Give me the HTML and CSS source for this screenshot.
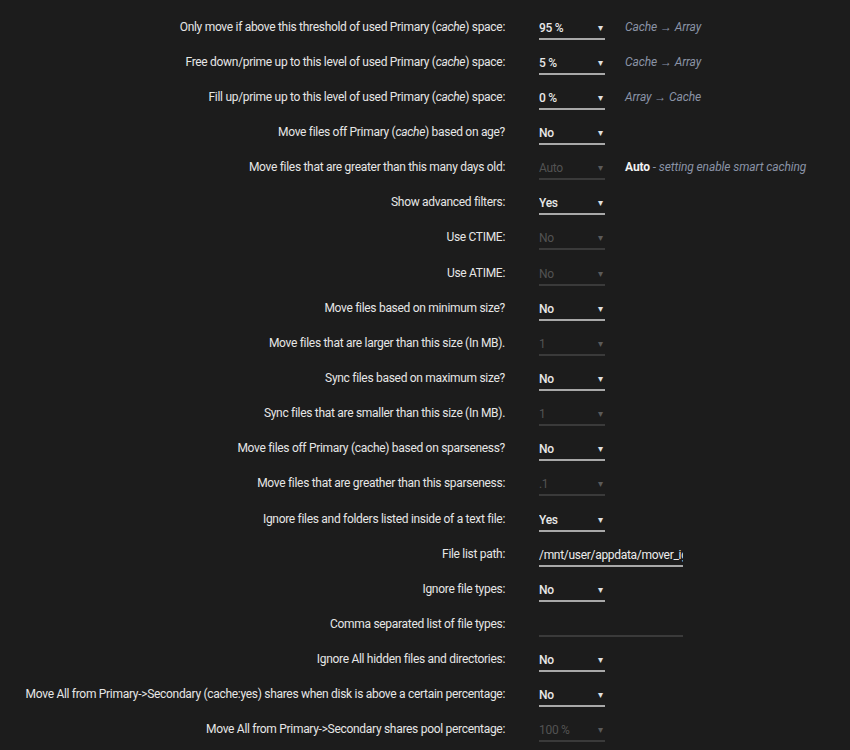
FILE: index.html
```html
<!DOCTYPE html>
<html lang="en">

<head>
    <meta charset="UTF-8" />
    <meta name="viewport" content="width=device-width, initial-scale=1.0" />
    <title>Mover Tuning</title>
    <link rel="stylesheet" href="styles.css">
</head>

<body>

    <div class="settings">

        <div class="row">
            <label>Only move if above this threshold of used Primary (<em>cache</em>) space:</label>
            <span class="select"><select><option>95 %</option></select></span>
            <span class="hint">Cache &rarr; Array</span>
        </div>

        <div class="row">
            <label>Free down/prime up to this level of used Primary (<em>cache</em>) space:</label>
            <span class="select"><select><option>5 %</option></select></span>
            <span class="hint">Cache &rarr; Array</span>
        </div>

        <div class="row">
            <label>Fill up/prime up to this level of used Primary (<em>cache</em>) space:</label>
            <span class="select"><select><option>0 %</option></select></span>
            <span class="hint">Array &rarr; Cache</span>
        </div>

        <div class="row">
            <label>Move files off Primary (<em>cache</em>) based on age?</label>
            <span class="select"><select><option>No</option></select></span>
        </div>

        <div class="row">
            <label>Move files that are greater than this many days old:</label>
            <span class="select disabled"><select disabled><option>Auto</option></select></span>
            <span class="hint"><b>Auto</b> - setting enable smart caching</span>
        </div>

        <div class="row">
            <label>Show advanced filters:</label>
            <span class="select"><select><option>Yes</option></select></span>
        </div>

        <div class="row">
            <label>Use CTIME:</label>
            <span class="select disabled"><select disabled><option>No</option></select></span>
        </div>

        <div class="row">
            <label>Use ATIME:</label>
            <span class="select disabled"><select disabled><option>No</option></select></span>
        </div>

        <div class="row">
            <label>Move files based on minimum size?</label>
            <span class="select"><select><option>No</option></select></span>
        </div>

        <div class="row">
            <label>Move files that are larger than this size (In MB).</label>
            <span class="select disabled"><select disabled><option>1</option></select></span>
        </div>

        <div class="row">
            <label>Sync files based on maximum size?</label>
            <span class="select"><select><option>No</option></select></span>
        </div>

        <div class="row">
            <label>Sync files that are smaller than this size (In MB).</label>
            <span class="select disabled"><select disabled><option>1</option></select></span>
        </div>

        <div class="row">
            <label>Move files off Primary (cache) based on sparseness?</label>
            <span class="select"><select><option>No</option></select></span>
        </div>

        <div class="row">
            <label>Move files that are greather than this sparseness:</label>
            <span class="select disabled"><select disabled><option>.1</option></select></span>
        </div>

        <div class="row">
            <label>Ignore files and folders listed inside of a text file:</label>
            <span class="select"><select><option>Yes</option></select></span>
        </div>

        <div class="row">
            <label>File list path:</label>
            <input type="text" class="text" value="/mnt/user/appdata/mover_ignore.txt">
        </div>

        <div class="row">
            <label>Ignore file types:</label>
            <span class="select"><select><option>No</option></select></span>
        </div>

        <div class="row">
            <label>Comma separated list of file types:</label>
            <input type="text" class="text disabled" value="" disabled>
        </div>

        <div class="row">
            <label>Ignore All hidden files and directories:</label>
            <span class="select"><select><option>No</option></select></span>
        </div>

        <div class="row">
            <label>Move All from Primary-&gt;Secondary (cache:yes) shares when disk is above a certain percentage:</label>
            <span class="select"><select><option>No</option></select></span>
        </div>

        <div class="row">
            <label>Move All from Primary-&gt;Secondary shares pool percentage:</label>
            <span class="select disabled"><select disabled><option>100 %</option></select></span>
        </div>

    </div>

</body>

</html>
```

FILE: styles.css
```css
body {
    margin: 0;
    padding: 9px 0 0 0;
    background-color: #1c1c1c;
    color: #e6e6e6;
    font-family: Roboto, "Liberation Sans", sans-serif;
    font-size: 12px;
    letter-spacing: -0.3px;
}

.settings {
    display: flex;
    flex-direction: column;
}

.row {
    display: grid;
    grid-template-columns: 505px 65px auto;
    align-items: center;
    height: 35.15px;
}

.row label {
    text-align: right;
    white-space: nowrap;
}

.row label em {
    font-style: italic;
}

.select,
.text {
    margin-left: 34px;
}

.select {
    position: relative;
    display: block;
    width: 66px;
    border-bottom: 2px solid #a8a8a8;
}

.select select {
    appearance: none;
    -webkit-appearance: none;
    width: 100%;
    background: transparent;
    border: none;
    color: #e8e8e8;
    font-family: inherit;
    font-size: 12px;
    font-weight: 500;
    letter-spacing: -0.3px;
    padding: 7px 0 3px 0;
    margin: 0;
    outline: none;
}

.select::after {
    content: "\25BE";
    position: absolute;
    right: 2px;
    top: 8px;
    font-size: 10px;
    color: #e0e0e0;
    pointer-events: none;
}

.select.disabled {
    border-bottom-color: #3a3a3a;
}

.select.disabled select {
    color: #6a6a6a;
    font-weight: 400;
}

.select.disabled::after {
    color: #5a5a5a;
}

.text {
    grid-column: 2 / span 2;
    width: 144px;
    box-sizing: border-box;
    background: transparent;
    border: none;
    border-bottom: 2px solid #a8a8a8;
    color: #ececec;
    font-family: inherit;
    font-size: 12px;
    letter-spacing: -0.3px;
    padding: 7px 0 3px 0;
    margin-top: 0;
    margin-bottom: 0;
    outline: none;
}

.text.disabled {
    border-bottom-color: #3a3a3a;
}

.hint {
    margin-left: 55px;
    font-style: italic;
    color: #8a93a6;
    white-space: nowrap;
    letter-spacing: -0.1px;
}

.hint b {
    font-style: normal;
    font-weight: 700;
    color: #f2f2f2;
}
```
